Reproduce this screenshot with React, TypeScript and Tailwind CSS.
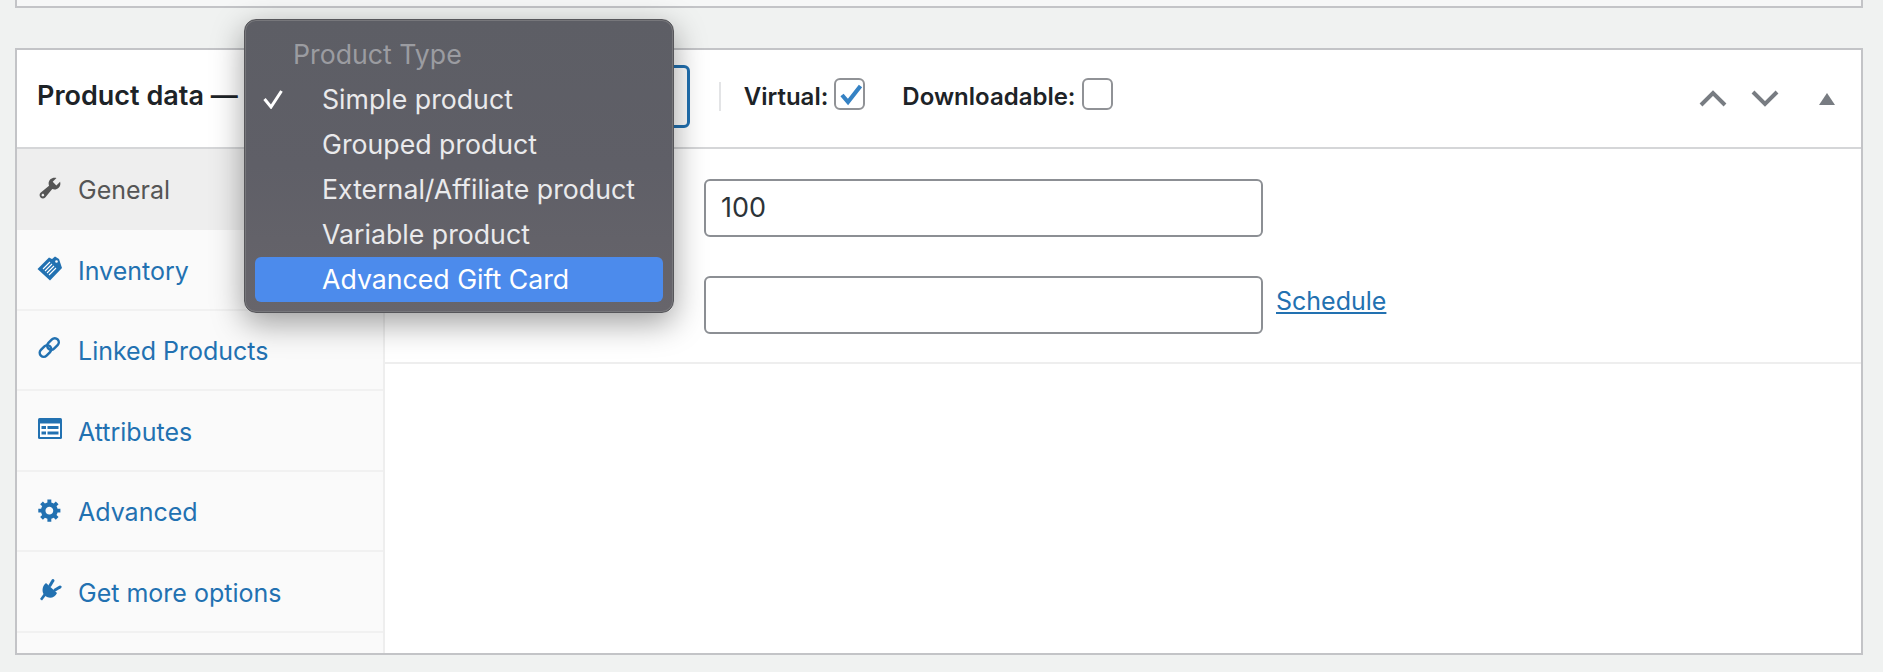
import React from 'react';

const font = { fontFamily: 'Inter, "Noto Sans", sans-serif' };

const WrenchIcon = () => (
  <svg width="26" height="26" viewBox="0 0 20 20" fill="currentColor">
    <path d="M16.68 9.77c-1.34 1.34-3.3 1.67-4.95.99l-5.41 6.52c-.99.99-2.59.99-3.58 0s-.99-2.59 0-3.57l6.52-5.42c-.68-1.65-.35-3.61.99-4.95 1.28-1.28 3.12-1.62 4.72-1.06l-2.89 2.89 2.82 2.82 2.86-2.87c.53 1.58.18 3.39-1.08 4.65zM3.81 16.21c.4.39 1.04.39 1.43 0 .4-.4.4-1.04 0-1.43-.39-.4-1.03-.4-1.43 0-.39.39-.39 1.03 0 1.43z" />
  </svg>
);

const GearIcon = () => (
  <svg width="26" height="26" viewBox="0 0 20 20" fill="currentColor">
    <path d="M18 12h-2.18c-.17.7-.44 1.35-.81 1.93l1.54 1.54-2.1 2.1-1.54-1.54c-.58.36-1.23.63-1.91.79V19H8v-2.18c-.68-.16-1.33-.43-1.91-.79l-1.54 1.54-2.12-2.12 1.54-1.54c-.36-.58-.63-1.23-.79-1.91H1V9.03h2.17c.16-.7.44-1.35.8-1.94L2.43 5.55l2.1-2.1 1.54 1.54c.58-.37 1.24-.64 1.93-.81V2h3v2.18c.68.16 1.33.43 1.91.79l1.54-1.54 2.12 2.12-1.54 1.54c.36.59.64 1.24.8 1.94H18V12zm-8.5 1.5c1.66 0 3-1.34 3-3s-1.34-3-3-3-3 1.34-3 3 1.34 3 3 3z" />
  </svg>
);

const TagIcon = () => (
  <svg width="26" height="26" viewBox="0 0 26 26" fill="none">
    <path d="M0.5 13 L12 1.5 L15 3 L18 0.5 L22 3 L25 12 L13 24.5 Z" fill="currentColor" />
    <path d="M6 13 L13 6 M8 15 L15 8 M10 17 L17 10 M12 19 L19 12" stroke="#fff" strokeWidth="1.1" />
    <circle cx="19.5" cy="5.5" r="1.3" fill="#fff" />
  </svg>
);

const LinkIcon = () => (
  <svg width="26" height="26" viewBox="0 0 26 26" fill="none" stroke="currentColor" strokeWidth="2.5">
    <rect x="12" y="1.5" width="8" height="13" rx="4" transform="rotate(45 16 8)" />
    <rect x="4.5" y="8.5" width="8" height="13" rx="4" transform="rotate(45 8.5 15)" />
  </svg>
);

const ListIcon = () => (
  <svg width="26" height="26" viewBox="0 0 26 26">
    <rect x="1" y="1" width="24" height="21" rx="1.5" fill="currentColor" />
    <rect x="3" y="6.5" width="20" height="13.5" fill="#fff" />
    <rect x="4.5" y="9" width="4.5" height="3" fill="currentColor" />
    <rect x="4.5" y="14.5" width="4.5" height="3" fill="currentColor" />
    <rect x="10.5" y="9" width="11" height="3" fill="currentColor" />
    <rect x="10.5" y="14.5" width="11" height="3" fill="currentColor" />
  </svg>
);

const PlugIcon = () => (
  <svg width="26" height="26" viewBox="0 0 26 26" fill="currentColor">
    <path d="M9 5 L20 15 C18 20 12 21 8.5 18 L5 22.5 L3 21 L6.5 16 C4.5 12 6 7 9 5 Z" />
    <path d="M13 7.5 L16 2.5" stroke="currentColor" strokeWidth="3" strokeLinecap="round" />
    <path d="M18 12 L23 9" stroke="currentColor" strokeWidth="3" strokeLinecap="round" />
  </svg>
);

const tabs = [
  { label: 'General', icon: <WrenchIcon />, active: true },
  { label: 'Inventory', icon: <TagIcon /> },
  { label: 'Linked Products', icon: <LinkIcon /> },
  { label: 'Attributes', icon: <ListIcon /> },
  { label: 'Advanced', icon: <GearIcon /> },
  { label: 'Get more options', icon: <PlugIcon /> },
];

const menuItems = ['Simple product', 'Grouped product', 'External/Affiliate product', 'Variable product'];

const App: React.FC = () => {
  return (
    <div className="relative h-[672px] w-[1883px] overflow-hidden bg-[#f0f2f1]" style={font}>
      <div className="ml-[15px] h-[8px] w-[1848px] border-x-2 border-b-2 border-[#c3c4c7] bg-[#f6f7f7]" />

      <div className="ml-[15px] mt-[40px] flex h-[607px] w-[1848px] flex-col border-2 border-[#c3c4c7] bg-white">
        {/* header */}
        <div className="flex h-[99px] shrink-0 items-center border-b-2 border-[#d5d6d8] pb-[4px] pl-[20px] pr-[26px]">
          <span className="whitespace-nowrap text-[27px] font-semibold text-[#1d2327]">Product data —</span>
          <div className="ml-[12px] h-[63px] w-[440px] rounded-[6px] border-[3px] border-[#2271b1]" />
          <div className="ml-[29px] h-[29px] w-[2px] bg-[#e3e4e6]" />
          <span className="ml-[23px] text-[24px] font-semibold text-[#1d2327]">Virtual:</span>
          <div className="mb-[5px] ml-[6px] h-[32px] w-[31px] rounded-[6px] border-2 border-[#909296]">
            <svg width="27" height="28" viewBox="0 0 27 28" fill="none" stroke="#3582c4" strokeWidth="4.2">
              <path d="M6 15 L12 22 L24.5 6" />
            </svg>
          </div>
          <span className="ml-[37px] text-[24px] font-semibold text-[#1d2327]">Downloadable:</span>
          <div className="mb-[5px] ml-[6px] h-[32px] w-[31px] rounded-[6px] border-2 border-[#909296]" />
          <div className="ml-auto mt-[4px] flex items-center gap-[24px] text-[#787c82]">
            <svg width="28" height="17" viewBox="0 0 28 17" fill="none" stroke="currentColor" strokeWidth="4">
              <path d="M2 15 L14 3 L26 15" />
            </svg>
            <svg width="28" height="17" viewBox="0 0 28 17" fill="none" stroke="currentColor" strokeWidth="4">
              <path d="M2 2 L14 14 L26 2" />
            </svg>
            <svg className="ml-[16px]" width="16" height="12" viewBox="0 0 16 12" fill="currentColor">
              <path d="M8 0 L16 12 L0 12 Z" />
            </svg>
          </div>
        </div>

        <div className="flex flex-1">
          {/* tabs */}
          <div className="w-[368px] shrink-0 border-r-2 border-[#eeeeee] bg-[#fafafa]">
            {tabs.map((tab) => (
              <div
                key={tab.label}
                className={
                  'flex items-start gap-[15px] pl-[20px] text-[25px] ' +
                  (tab.active
                    ? 'h-[81px] bg-[#eeeeee] pt-[26px] text-[#555555]'
                    : 'h-[80.5px] border-b-2 border-[#f1f1f1] pt-[25.5px] text-[#2271b1]')
                }
              >
                <span className="shrink-0">{tab.icon}</span>
                <span className="whitespace-nowrap leading-[30px]">{tab.label}</span>
              </div>
            ))}
          </div>

          {/* fields */}
          <div className="flex-1">
            <div className="flex h-[215px] flex-col gap-[39px] border-b-2 border-[#eeeeee] pl-[319px] pt-[30px]">
              <div className="flex h-[58px] w-[559px] items-center rounded-[6px] border-2 border-[#8c8f94] pl-[15px] text-[27px] text-[#2c3338]">
                100
              </div>
              <div className="flex items-center">
                <div className="h-[58px] w-[559px] rounded-[6px] border-2 border-[#8c8f94]" />
                <a className="mb-[6px] ml-[13px] text-[25px] text-[#2271b1] underline">Schedule</a>
              </div>
            </div>
          </div>
        </div>
      </div>

      {/* native select menu */}
      <div className="absolute left-[244px] top-[19px] h-[294px] w-[430px] rounded-[12px] border border-[#56565a] bg-gradient-to-b from-[#5d5e65] via-[#5f5f67] to-[#67656b] px-[10px] pt-[12px] shadow-[inset_0_0_0_1px_#77777b,0_10px_32px_rgba(0,0,0,0.38)]">
        <div className="flex h-[45px] items-center pl-[38px] text-[26.7px] text-[#9b9ca1]">Product Type</div>
        {menuItems.map((item, i) => (
          <div key={item} className="relative flex h-[45px] items-center pl-[67px] text-[26.7px] text-[#eaeaec]">
            {i === 0 && (
              <svg className="absolute left-[8px] top-[12px]" width="20" height="20" viewBox="0 0 20 20" fill="none" stroke="#fff" strokeWidth="3">
                <path d="M1.5 10 L8 18 L18.5 2" />
              </svg>
            )}
            {item}
          </div>
        ))}
        <div className="flex h-[45px] items-center rounded-[6px] bg-[#4c8bec] pl-[67px] text-[26.7px] text-white">
          Advanced Gift Card
        </div>
      </div>
    </div>
  );
};

export default App;
